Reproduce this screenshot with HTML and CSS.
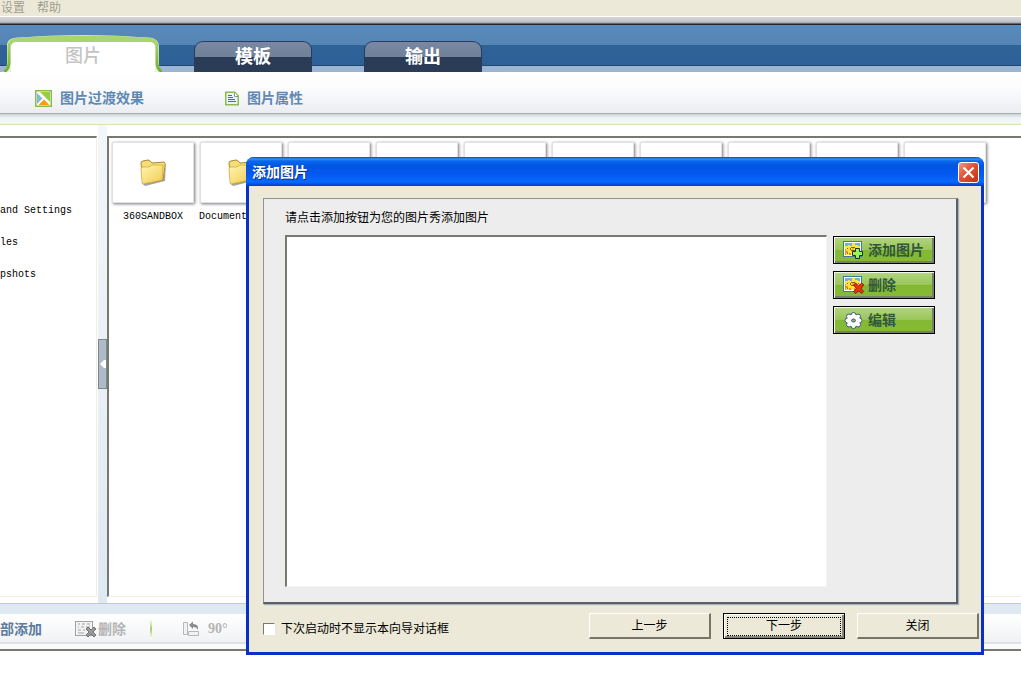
FILE: index.html
```html
<!DOCTYPE html>
<html lang="zh-CN">
<head>
<meta charset="utf-8">
<title>添加图片</title>
<link rel="stylesheet" href="styles.css">
</head>
<body>
<svg class="defs" aria-hidden="true">
  <defs>
    <linearGradient id="gold" x1="0" y1="0" x2="1" y2="1"><stop offset="0" stop-color="#fff6b4"/><stop offset="1" stop-color="#f2cb4c"/></linearGradient>
    <linearGradient id="leaf" x1="0" y1="0" x2="0" y2="1"><stop offset="0" stop-color="#b2d97c"/><stop offset=".3" stop-color="#9fcd60"/><stop offset="1" stop-color="#72ae2c"/></linearGradient>
    <symbol id="folder" viewBox="0 0 28 28">
      <path d="M4 25 L24 21 L27 5 L26 22 L6 27 Z" fill="#666" opacity=".6"/>
      <path d="M2 4 Q2 2 4 2 L9 1 Q11 1 13 4 L25 3 Q27 4 26 7 L24 21 L4 25 Z" fill="#f4dc77" stroke="#a98a35"/>
      <path d="M2 10 Q2 8 4 8 L10 8 L13 6 L24 6 L23 21 L4 25 Q3 25 3 23 Z" fill="url(#gold)" stroke="#d2ad43" stroke-width=".8"/>
    </symbol>
    <symbol id="photo" viewBox="0 0 22 19">
      <rect x=".5" y=".5" width="18" height="15" fill="#fff" stroke="#42799b"/>
      <rect x="2" y="2" width="15" height="12" fill="#79afd2"/>
      <path d="M2 9h15v5H2z" fill="#e0951c"/>
      <path d="M2 5h3V4h2v1h2V2h3v2h3v1h2v3h-1v2h1v3h-4v-1h-2v2H8v-2H6v2H3v-2h2v-2H3V8H2z" fill="#ffe23f"/>
      <path d="M8 6h4v1H8zM7 7h1v2H7zM12 7h1v2h-1zM8 9h4v1H8zM4 7h1v1H4zM15 7h1v1h-1zM4 12h1v1H4zM14 11h1v1h-1z" fill="#866312"/>
      <path d="M9 7h2v2H9z" fill="#f4b52a"/>
    </symbol>
  </defs>
</svg>

<nav class="menubar">
  <button type="button">设置</button>
  <button type="button">帮助</button>
</nav>
<header class="tabs">
  <button type="button" class="tab tab-active">
    <svg class="tab-shape" viewBox="0 0 162 37" aria-hidden="true">
      <path d="M2 37 Q7 35 7 28 V11 Q7 4 14 3 Q84 -3 151 3 Q159 4 159 12 V28 Q159 35 162 37 Z" fill="#e6f2d6"/>
      <path d="M4 37 Q9 34 9 27 V12 Q9 5 17 4 Q84 0 150 4 Q157 5 157 12 V27 Q157 34 162 37" fill="none" stroke="url(#leaf)" stroke-width="3"/>
      <path d="M10 10 Q12 4 20 3 Q84 -1 147 3 Q154 4 156 10 Z" fill="#a9d46e"/>
      <path d="M11 37 V12 Q11 7 17 7 H149 Q155 7 155 12 V37 Z" fill="#fff"/>
    </svg>
    <span>图片</span>
  </button>
  <button type="button" class="tab tab-dark">模板</button>
  <button type="button" class="tab tab-dark">输出</button>
</header>
<div class="toolbar">
  <button type="button" class="tool tool-wide">
    <svg width="17" height="17" viewBox="0 0 17 17" aria-hidden="true"><rect x=".75" y=".75" width="15.500" height="15.500" fill="#fff" stroke="#86bd45" stroke-width="1.500"/><path d="M2 3v11l5.500-5.500z" fill="#8ab4d8"/><path d="M5 2h10v10z" fill="#9bca48"/><path d="M3.500 15L9 9.500l5.500 5.500z" fill="#ff9a13"/></svg>
    图片过渡效果
  </button>
  <button type="button" class="tool">
    <svg width="14" height="15" viewBox="0 0 14 15" aria-hidden="true"><path d="M.75 1.250h9l3.500 3.500v9H.75z" fill="#edf2f7" stroke="#8cbb49" stroke-width="1.500"/><path d="M9.500 1.500v4H13" fill="#fff" stroke="#7f98ae"/><path d="M3 4.500h4M3 6.500h5M3 8.500h7M3 10.500h8" stroke="#516b80"/></svg>
    图片属性
  </button>
</div>
<div class="strip"></div>

<main class="workspace">
  <aside class="pane tree-pane">
    <ul class="tree">
      <li>and Settings</li>
      <li>les</li>
      <li>pshots</li>
    </ul>
  </aside>
  <div class="gutter">
    <button type="button" class="splitter" aria-label="折叠"><svg width="6" height="8" viewBox="0 0 6 8" aria-hidden="true"><path d="M0 4L4 0h2v8H4z" fill="#fff"/></svg></button>
  </div>
  <section class="pane files-pane">
    <div class="files">
      <figure><div class="thumb"><svg width="28" height="28"><use href="#folder"/></svg></div><figcaption>360SANDBOX</figcaption></figure>
      <figure><div class="thumb"><svg width="28" height="28"><use href="#folder"/></svg></div><figcaption>Documents a...</figcaption></figure>
      <figure><div class="thumb"></div></figure>
      <figure><div class="thumb"></div></figure>
      <figure><div class="thumb"></div></figure>
      <figure><div class="thumb"></div></figure>
      <figure><div class="thumb"></div></figure>
      <figure><div class="thumb"></div></figure>
      <figure><div class="thumb"></div></figure>
      <figure><div class="thumb"></div></figure>
    </div>
  </section>
</main>

<footer class="bottom">
  <div class="bottom-bar">
    <button type="button" class="add-all">部添加</button>
    <button type="button" class="muted">
      <svg width="22" height="18" viewBox="0 0 22 18" aria-hidden="true"><rect x=".5" y="1.500" width="17" height="14" fill="#f3f3f3" stroke="#a2a2a2"/><path d="M3 4h2M7 4h3M12 4h3M3 7h1M6 7h3M11 7h4M3 10h3M8 10h2M3 13h6" stroke="#bdbdbd" stroke-width="1.500"/><path d="M11 9l2-2 3 3 3-3 2 2-3 3 3 3-2 2-3-3-3 3-2-2 3-3z" fill="#999" stroke="#747474"/></svg>删除
    </button>
    <span class="divider"></span>
    <button type="button" class="muted rotate">
      <svg width="18" height="16" viewBox="0 0 18 16" aria-hidden="true"><path d="M1.500 1.500h4v12h-4zM6.500 10.500h10v4h-10z" fill="#f2f2f2" stroke="#b8b8b8"/><path d="M7 4l4-3.500V3q6 0 5 6-1-3-5-3v2z" fill="#8b8b8b"/></svg>90°
    </button>
  </div>
</footer>

<section class="dialog" role="dialog" aria-labelledby="dialog-title">
  <header class="titlebar">
    <h1 id="dialog-title">添加图片</h1>
    <button type="button" class="close" aria-label="关闭窗口"><svg width="13" height="13" viewBox="0 0 13 13" aria-hidden="true"><path d="M1.500 1.500l10 10M11.500 1.500l-10 10" stroke="#fff" stroke-width="2.200"/></svg></button>
  </header>
  <div class="dialog-body">
    <div class="card">
      <p>请点击添加按钮为您的图片秀添加图片</p>
      <div class="card-row">
        <div class="list"></div>
        <div class="actions">
          <button type="button"><svg width="22" height="19" viewBox="0 0 22 19" aria-hidden="true"><use href="#photo" width="22" height="19"/><path d="M12.500 7.500h4v3h3v4h-3v3h-4v-3h-3v-4h3z" fill="#9af25c" stroke="#123812"/></svg>添加图片</button>
          <button type="button"><svg width="22" height="19" viewBox="0 0 22 19" aria-hidden="true"><use href="#photo" width="22" height="19"/><path d="M10.500 9l2-2 3.200 3 3-3 2 2-2.700 3.500 2.700 3-2 2-3-2.700-3.200 2.700-2-2 3-3z" fill="#f5300d" stroke="#8b160c"/></svg>删除</button>
          <button type="button"><svg width="22" height="19" viewBox="0 0 22 19" aria-hidden="true"><g fill="#fff" stroke="#3c5a78"><circle cx="10.500" cy="4" r="2.500"/><circle cx="15" cy="5.500" r="2.500"/><circle cx="16.500" cy="9.500" r="2.500"/><circle cx="15" cy="13.500" r="2.500"/><circle cx="10.500" cy="15" r="2.500"/><circle cx="6" cy="13.500" r="2.500"/><circle cx="4.500" cy="9.500" r="2.500"/><circle cx="6" cy="5.500" r="2.500"/></g><ellipse cx="10.500" cy="9.500" rx="6.500" ry="6" fill="#fff"/><ellipse cx="10.500" cy="9.500" rx="2" ry="1.500" fill="#8fb08f" stroke="#40586a"/></svg>编辑</button>
        </div>
      </div>
    </div>
    <div class="dialog-foot">
      <label><input type="checkbox">下次启动时不显示本向导对话框</label>
      <div class="foot-buttons">
        <button type="button">上一步</button>
        <button type="button" class="default"><span>下一步</span></button>
        <button type="button">关闭</button>
      </div>
    </div>
  </div>
</section>
</body>
</html>
```

FILE: styles.css
```css
* { box-sizing: border-box; }

body {
  position: relative;
  display: flex;
  flex-direction: column;
  min-height: 100vh;
  margin: 0;
  overflow: hidden;
  background: #fff;
  color: #000;
  font: 12px/16px "Liberation Sans", "Noto Sans CJK SC", sans-serif;
}

button {
  padding: 0;
  border: 0;
  background: none;
  font: inherit;
  color: inherit;
  white-space: nowrap;
}

.defs { position: absolute; width: 0; height: 0; }

.menubar {
  display: flex;
  gap: 12px;
  height: 25px;
  padding: 0 1px 12px;
  background: linear-gradient(#ece9d8 16px, #fff 16px, #fff 17px, #d6d6d8 17px, #c8c8ca 21px, #a6a6a8 23px, #1d2530 24px);
  color: #a19e90;
}

.tabs {
  display: flex;
  align-items: flex-end;
  height: 47px;
  background: linear-gradient(#5a8aba 0, #5585b5 20px, #2f6297 20px, #2d6096 40px, #25476f 40px, #25476f 41px, #9cb5d3 41px);
}

.tab {
  font-size: 18px;
  font-weight: 700;
  line-height: 24px;
}

.tab-active {
  position: relative;
  width: 162px;
  height: 37px;
  padding: 4px 0 0 4px;
  margin-right: 32px;
  font-weight: 500;
  color: #c4c4c4;
}

.tab-active span { position: relative; }

.tab-shape {
  position: absolute;
  inset: 0;
}

.tab-dark {
  width: 118px;
  height: 31px;
  margin-right: 52px;
  border: 1px solid #273c60;
  border-bottom: 0;
  border-radius: 9px 9px 0 0;
  background: linear-gradient(#7b87a3, #6f8197 15px, #293b55 15px, #2b3c56);
  color: #fff;
}

.toolbar {
  display: flex;
  align-items: center;
  height: 42px;
  padding: 11px 35px 0;
  border-bottom: 1px solid #aab0b4;
  background: linear-gradient(#fff, #fdfdfe 12px, #fff 12px, #ebedf1);
}

.tool {
  display: flex;
  align-items: center;
  gap: 8px;
  color: #5f89b5;
  font-size: 14px;
  font-weight: 700;
}

.tool-wide { width: 190px; }

.strip {
  height: 11px;
  border-bottom: 1px solid #d5e4b4;
  background: linear-gradient(#ced3d5, #eef4f6 4px, #f3f7fa);
}

.workspace {
  display: flex;
  flex: 1;
  min-height: 0;
}

.pane {
  margin: 11px 0 6px;
  border-top: 2px solid #777970;
  border-bottom: 1px solid #f0efe2;
}

.tree-pane {
  width: 97px;
  border-right: 1px solid #f0efe2;
}

.tree {
  margin: 65px 0 0;
  padding: 0;
  list-style: none;
  font: 10px/16px "Liberation Mono", monospace;
}

.tree li { margin-bottom: 16px; }

.gutter {
  display: flex;
  align-items: center;
  width: 9px;
  margin-left: 1px;
  background: linear-gradient(#f3f7fa, #dfe9f2);
}

.splitter {
  width: 9px;
  height: 50px;
  border: 1px solid #7c8790;
  background: #aebbc8;
  line-height: 8px;
}

.files-pane {
  flex: 1;
  border-left: 2px solid #777970;
}

.files {
  display: flex;
  gap: 6px;
  padding: 4px 3px;
}

.files figure {
  flex: none;
  width: 82px;
  margin: 0;
}

.thumb {
  display: flex;
  align-items: center;
  justify-content: center;
  height: 61px;
  border: 1px solid #e0e0e2;
  box-shadow: 1px 1px 3px #77777f;
  background: #fff;
}

.files figcaption {
  display: flex;
  justify-content: center;
  margin-top: 5px;
  font: 10px/18px "Liberation Mono", monospace;
  white-space: nowrap;
}

.bottom {
  padding-bottom: 31px;
  border-top: 1px solid #c2d0a8;
}

.bottom-bar {
  display: flex;
  align-items: center;
  height: 47px;
  padding: 3px 0 9px;
  border-top: 10px solid #dfe9f2;
  border-bottom: 2px solid #777970;
  background: linear-gradient(#fff, #f0f2f4 28px, #c8cbd0 29px, #fafafa 30px);
  color: #5c7da0;
  font-size: 14px;
  font-weight: 700;
}

.add-all { width: 75px; text-align: left; }

.muted {
  display: flex;
  align-items: center;
  gap: 1px;
  color: #b4b4b4;
}

.divider {
  width: 2px;
  height: 20px;
  margin: 0 30px 0 24px;
  background: linear-gradient(#fff, #a8cb70, #fff);
}

.rotate {
  gap: 8px;
  font-family: "Liberation Serif", serif;
}

.dialog {
  position: absolute;
  top: 157px;
  left: 246px;
  display: flex;
  flex-direction: column;
  width: 738px;
  height: 498px;
  border: 3px solid #0831c5;
  border-top: 0;
  border-radius: 8px 8px 0 0;
  background: #ece9d8;
}

.titlebar {
  display: flex;
  align-items: center;
  justify-content: space-between;
  height: 29px;
  margin: 0 -3px;
  padding: 1px 5px 0 6px;
  border-radius: 8px 8px 0 0;
  background: linear-gradient(#0648b5, #348fff 2px, #0868ed 4px, #0054e1 9px, #0558f0 17px, #066aff 25px, #003dc2);
}

.titlebar h1 {
  margin: 0;
  color: #fff;
  font-size: 14px;
  line-height: 20px;
  text-shadow: 1px 1px #0a318a;
}

.close {
  display: grid;
  place-items: center;
  width: 21px;
  height: 21px;
  border: 1px solid #fff;
  border-radius: 3px;
  background: linear-gradient(135deg, #ef9a80, #df5434 45%, #bd3311);
}

.dialog-body {
  display: flex;
  flex: 1;
  flex-direction: column;
  padding: 12px 2px 13px 14px;
}

.card {
  display: flex;
  flex: 1;
  flex-direction: column;
  margin-right: 21px;
  padding: 11px 21px 15px;
  border: 1px solid #929294;
  border-right: 2px solid #5d6067;
  border-bottom: 2px solid #5d6067;
  box-shadow: 1px 1px 1px #a4b1be;
  background: #ededed;
}

.card p { margin: 0 0 9px; }

.card-row {
  display: flex;
  flex: 1;
  gap: 6px;
}

.list {
  flex: 1;
  border: 1px solid #f4f4ee;
  border-top: 2px solid #777970;
  border-left: 2px solid #777970;
  background: #fff;
}

.actions {
  display: flex;
  flex-direction: column;
  gap: 7px;
  width: 102px;
  padding-top: 1px;
}

.actions button {
  display: flex;
  align-items: center;
  gap: 3px;
  height: 28px;
  padding-left: 9px;
  border: 1px solid #000;
  box-shadow: inset 1px 1px #f4f8e9, inset -2px -2px #75806c;
  background: linear-gradient(#b3d583, #99c657 13px, #83b932 13px, #86ba35);
  color: #31573c;
  font-size: 14px;
  font-weight: 700;
}

.dialog-foot {
  display: flex;
  align-items: center;
  justify-content: space-between;
  padding-top: 9px;
}

.dialog-foot label {
  display: flex;
  align-items: center;
  gap: 6px;
  padding-top: 5px;
}

.dialog-foot input {
  width: 12px;
  height: 12px;
  margin: 0;
  appearance: none;
  border: 1px solid #fff;
  border-top-color: #777970;
  border-left-color: #777970;
  background: #fff;
}

.foot-buttons {
  display: flex;
  gap: 12px;
}

.foot-buttons button {
  width: 122px;
  height: 26px;
  border: 1px solid #fff;
  border-right: 2px solid #777569;
  border-bottom: 2px solid #777569;
  background: #ece9d8;
}

.foot-buttons .default {
  padding: 2px;
  border: 1px solid #000;
  box-shadow: inset 1px 1px #fff, inset -2px -2px #87857a;
}

.default span {
  display: grid;
  place-items: center;
  height: 19px;
  margin: 0 1px;
  border: 1px dotted #000;
}
```
